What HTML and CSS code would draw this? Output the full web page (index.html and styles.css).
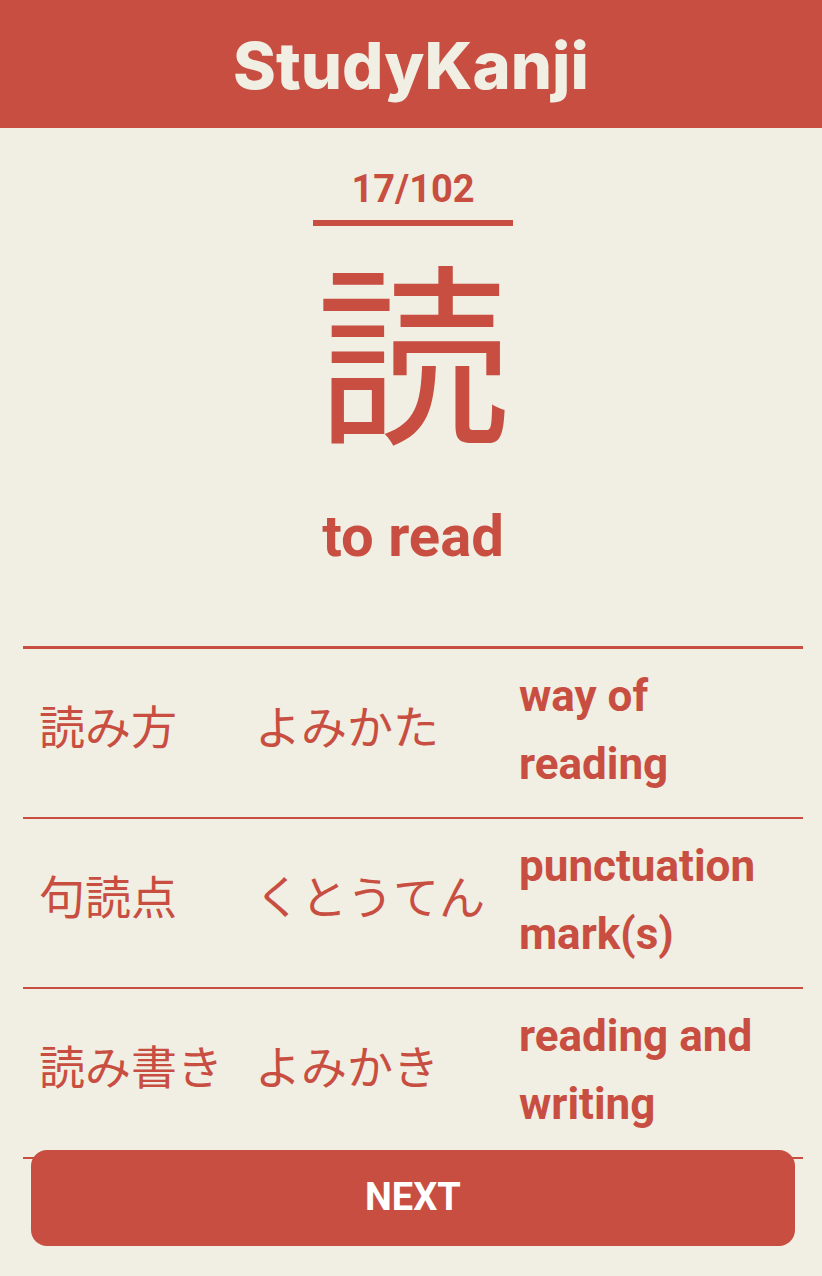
FILE: index.html
```html
<!DOCTYPE html>
<html lang="en">
<head>
<meta charset="utf-8">
<meta name="viewport" content="width=device-width, initial-scale=1">
<title>StudyKanji</title>
<link rel="stylesheet" href="styles.css">
</head>
<body>
<header class="header"><h1 class="brand">StudyKanji</h1></header>
<main class="main">
  <p class="progress">17/102</p>
  <p class="kanji" lang="ja">読</p>
  <h2 class="meaning">to read</h2>
  <table class="words">
    <tbody>
      <tr><td class="word" lang="ja">読み方</td><td class="reading" lang="ja">よみかた</td><td class="sense">way of reading</td></tr>
      <tr><td class="word" lang="ja">句読点</td><td class="reading" lang="ja">くとうてん</td><td class="sense">punctuation mark(s)</td></tr>
      <tr><td class="word" lang="ja">読み書き</td><td class="reading" lang="ja">よみかき</td><td class="sense">reading and writing</td></tr>
    </tbody>
  </table>
</main>
<footer class="footer"><button class="next" type="button">NEXT</button></footer>
</body>
</html>
```
FILE: styles.css
```css
:root {
  --red: #c84e41;
  --cream: #f1eee3;
}

* {
  box-sizing: border-box;
}

body {
  margin: 0;
  background: var(--cream);
  color: var(--red);
  font-family: Roboto, "Noto Sans CJK JP", sans-serif;
}

.header {
  display: flex;
  justify-content: center;
  padding: 26px 24px 22px;
  background: var(--red);
}

.brand {
  margin: 0;
  color: var(--cream);
  font-family: Inter, sans-serif;
  font-size: 65px;
  font-weight: 800;
  line-height: 80px;
}

.main {
  display: flex;
  flex-direction: column;
  align-items: center;
  padding: 32px 19px 112px 23px;
}

.progress {
  width: 200px;
  margin: 0;
  padding: 3px 0 5px;
  border-bottom: 6px solid var(--red);
  font-size: 38px;
  font-weight: 700;
  line-height: 52px;
  text-align: center;
}

.kanji {
  margin: 0;
  font-family: "Noto Sans CJK JP", sans-serif;
  font-size: 194px;
  line-height: 240px;
}

.meaning {
  margin: 28px 0 68px;
  font-size: 58px;
  font-weight: 700;
  line-height: 84px;
}

.words {
  width: 100%;
  border-spacing: 0;
  border-top: 3px solid var(--red);
}

.words td {
  padding: 13px 0 19px 16px;
  border-bottom: 2px solid var(--red);
  line-height: 68px;
  text-align: left;
}

.words .word,
.words .reading {
  padding-top: 7px;
  padding-bottom: 25px;
  font-family: "Noto Sans CJK JP", sans-serif;
  font-size: 46px;
  white-space: nowrap;
}

.word {
  width: 216px;
}

.reading {
  width: 264px;
}

.sense {
  font-size: 44px;
  font-weight: 700;
}

.footer {
  position: fixed;
  right: 27px;
  bottom: 30px;
  left: 31px;
}

.next {
  width: 100%;
  padding: 19px 20px 21px;
  border: 0;
  border-radius: 16px;
  background: var(--red);
  color: #fff;
  font-family: Roboto, sans-serif;
  font-size: 38px;
  font-weight: 700;
  line-height: 56px;
  cursor: pointer;
}
```
